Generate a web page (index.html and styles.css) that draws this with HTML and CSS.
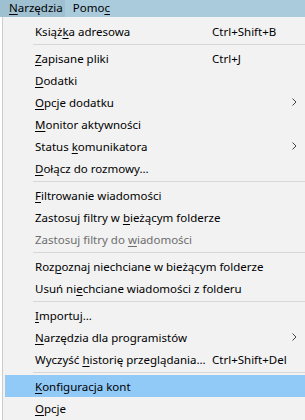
FILE: index.html
```html
<!DOCTYPE html>
<html lang="pl">
<head>
<meta charset="utf-8">
<link rel="stylesheet" href="styles.css">
</head>
<body>
<div class="menubar">
  <span class="mb-item active"><u>N</u>arzędzia</span>
  <span class="mb-item">Pomo<u>c</u></span>
</div>
<div class="below">
  <div class="behind"></div>
  <div class="menu">
    <div class="item"><span class="label">Książ<u>k</u>a adresowa</span><span class="key">Ctrl+Shift+B</span></div>
    <div class="sep"></div>
    <div class="item"><span class="label"><u>Z</u>apisane pliki</span><span class="key">Ctrl+J</span></div>
    <div class="item"><span class="label"><u>D</u>odatki</span></div>
    <div class="item"><span class="label"><u>O</u>pcje dodatku</span><span class="key"></span><span class="arrow"><svg width="5" height="8" viewBox="0 0 5 8"><path d="M0.5 0.5 L4 4 L0.5 7.5" fill="none" stroke="#444" stroke-width="1"/></svg></span></div>
    <div class="item"><span class="label"><u>M</u>onitor aktywności</span></div>
    <div class="item"><span class="label">Status <u>k</u>omunikatora</span><span class="key"></span><span class="arrow"><svg width="5" height="8" viewBox="0 0 5 8"><path d="M0.5 0.5 L4 4 L0.5 7.5" fill="none" stroke="#444" stroke-width="1"/></svg></span></div>
    <div class="item"><span class="label"><u>D</u>ołącz do rozmowy…</span></div>
    <div class="sep"></div>
    <div class="item"><span class="label"><u>F</u>iltrowanie wiadomości</span></div>
    <div class="item"><span class="label">Zastosuj filtry w <u>b</u>ieżącym folderze</span></div>
    <div class="item disabled"><span class="label">Zastosuj filtry do <u>w</u>iadomości</span></div>
    <div class="sep"></div>
    <div class="item"><span class="label">Roz<u>p</u>oznaj niechciane w bieżącym folderze</span></div>
    <div class="item"><span class="label">Usuń ni<u>e</u>chciane wiadomości z folderu</span></div>
    <div class="sep"></div>
    <div class="item"><span class="label"><u>I</u>mportuj…</span></div>
    <div class="item"><span class="label"><u>N</u>arzędzia dla programistów</span><span class="key"></span><span class="arrow"><svg width="5" height="8" viewBox="0 0 5 8"><path d="M0.5 0.5 L4 4 L0.5 7.5" fill="none" stroke="#444" stroke-width="1"/></svg></span></div>
    <div class="item"><span class="label">Wyczyść <u>h</u>istorię przeglądania…</span><span class="key">Ctrl+Shift+Del</span></div>
    <div class="sep"></div>
    <div class="item hover"><span class="label"><u>K</u>onfiguracja kont</span></div>
    <div class="item"><span class="label"><u>O</u>pcje</span></div>
  </div>
</div>
</body>
</html>
```

FILE: styles.css
```css
html, body {
  margin: 0;
  padding: 0;
}
body {
  width: 305px;
  height: 420px;
  overflow: hidden;
  background: #ffffff;
  font-family: "Segoe UI", "Noto Sans", sans-serif;
  font-size: 11.5px;
  color: #000;
}
u {
  text-decoration: underline;
  text-decoration-thickness: 1px;
  text-underline-offset: 2px;
}
.menubar {
  height: 17px;
  background: #a9cbdc;
  display: flex;
}
.mb-item {
  line-height: 16px;
  padding: 0 2px 0 8px;
  white-space: nowrap;
}
.mb-item.active {
  background: #9fc0d1;
  padding-left: 9px;
}
.below {
  display: flex;
  height: 403px;
  overflow: hidden;
}
.behind {
  width: 2px;
  flex: none;
  background: #fff;
}
.menu {
  flex: 1;
  min-width: 0;
  border-left: 1px solid #cccccc;
  background: #f2f2f2;
  padding: 3px 0 0 2px;
}
.item {
  height: 22px;
  display: grid;
  grid-template-columns: 207px 80px 1fr;
  align-items: center;
  white-space: nowrap;
}
.label {
  padding-left: 30px;
}
.arrow {
  display: flex;
  align-items: center;
}
.disabled {
  color: #6d6d6d;
}
.hover {
  background: #91c9f7;
}
.sep {
  height: 1px;
  background: #d7d7d7;
  margin: 2px 0 2px 28px;
}
```
